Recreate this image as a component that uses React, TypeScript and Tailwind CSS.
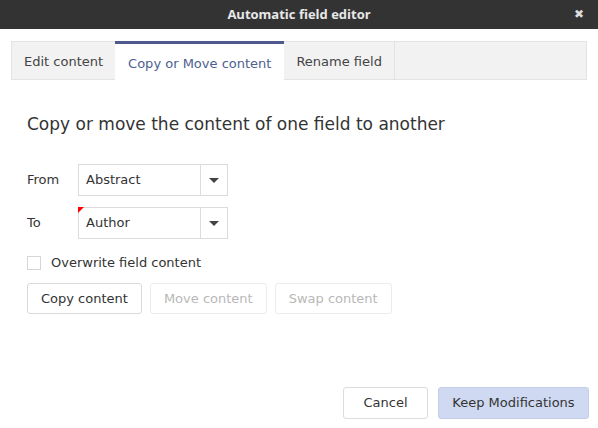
import { useState } from 'react';

const font = { fontFamily: '"DejaVu Sans", Verdana, sans-serif' };

function Select({ value, marked }: { value: string; marked?: boolean }) {
    return (
        <div className="relative flex h-[32px] w-[150px] border border-[#dcdcdc] bg-white">
            {marked && (
                <span className="absolute -left-px -top-px h-0 w-0 border-r-[6px] border-t-[6px] border-r-transparent border-t-[#ff0000]" />
            )}
            <div className="flex flex-1 items-center pl-[7px] text-[13px] text-[#333]">{value}</div>
            <div className="flex w-[27px] items-center justify-center border-l border-[#dcdcdc]">
                <span className="h-0 w-0 border-x-[5px] border-t-[5px] border-x-transparent border-t-[#444]" />
            </div>
        </div>
    );
}

export default function App() {
    const [tab] = useState(1);
    const tabs = ['Edit content', 'Copy or Move content', 'Rename field'];

    return (
        <div className="flex h-[428px] w-[598px] flex-col bg-white" style={font}>
            {/* Title bar */}
            <div className="relative flex h-[29px] items-center justify-center bg-[#333333]">
                <span className="text-[13px] font-bold text-[#e8e8e8]" style={{ fontFamily: '"Open Sans", sans-serif' }}>
                    Automatic field editor
                </span>
                <span className="absolute right-[14px] top-[8px] text-[12px] font-bold leading-none text-[#ddd]">✖</span>
            </div>

            {/* Tabs */}
            <div className="mx-[11px] mt-[12px] flex h-[39px] border border-[#e3e3e3] bg-[#f2f2f2]">
                {tabs.map((t, i) => (
                    <div
                        key={t}
                        className={
                            i === tab
                                ? '-mb-px -mt-px flex items-center border-t-[3px] border-[#4f5a8c] bg-white px-[13px] pt-[3px] text-[13px] text-[#4d5f91]'
                                : 'flex items-center border-r border-[#e3e3e3] px-[12px] pt-[3px] text-[13px] text-[#444] first:border-r-0'
                        }
                    >
                        {t}
                    </div>
                ))}
            </div>

            {/* Body */}
            <div className="flex flex-1 flex-col px-[27px]">
                <h1 className="mt-[33px] text-[17px] leading-[22px] text-[#333]">
                    Copy or move the content of one field to another
                </h1>

                <div className="mt-[29px] flex flex-col gap-[11px]">
                    <div className="flex items-center">
                        <span className="w-[51px] text-[13px] text-[#333]">From</span>
                        <Select value="Abstract" />
                    </div>
                    <div className="flex items-center">
                        <span className="w-[51px] text-[13px] text-[#333]">To</span>
                        <Select value="Author" marked />
                    </div>
                </div>

                <label className="mt-[14px] flex items-center gap-[10px]">
                    <span className="h-[14px] w-[14px] border border-[#d6d6d6] bg-white" />
                    <span className="text-[13px] text-[#333]">Overwrite field content</span>
                </label>

                <div className="mt-[10px] flex gap-[8px]">
                    <button className="h-[31px] rounded-[3px] border border-[#d9d9d9] bg-white px-[13px] pt-px text-[13px] text-[#333]">
                        Copy content
                    </button>
                    <button className="h-[31px] rounded-[3px] border border-[#ececec] bg-white px-[13px] pt-px text-[13px] text-[#b8b8b8]">
                        Move content
                    </button>
                    <button className="h-[31px] rounded-[3px] border border-[#ececec] bg-white px-[13px] pt-px text-[13px] text-[#b8b8b8]">
                        Swap content
                    </button>
                </div>

                <div className="mt-auto mb-[9px] flex justify-end gap-[10px] -mr-[18px]">
                    <button className="h-[32px] w-[85px] rounded-[3px] border border-[#dcdcdc] bg-white text-[13px] text-[#333]">
                        Cancel
                    </button>
                    <button className="h-[32px] w-[151px] rounded-[3px] border border-[#c3cde8] bg-[#cfd9f1] text-[13px] text-[#333]">
                        Keep Modifications
                    </button>
                </div>
            </div>
        </div>
    );
}
